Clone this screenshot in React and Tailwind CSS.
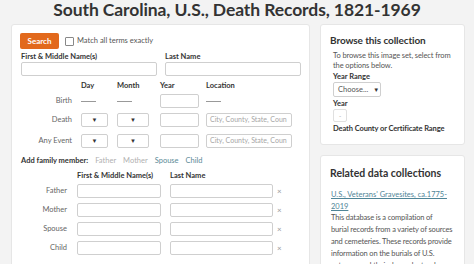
// Formulario de búsqueda de colección con barra lateral
import React from 'react';

const font = { fontFamily: 'Lato, "Noto Sans", sans-serif' };

function Box({ className = '', children }) {
  return (
    <div className={`h-[14px] border border-[#cfcfcf] rounded-[2px] bg-white flex items-center ${className}`}>
      {children}
    </div>
  );
}

function Select({ className = '' }) {
  return (
    <Box className={`justify-center ${className}`}>
      <span className="text-[6px] text-[#333] leading-none">▼</span>
    </Box>
  );
}

function Dash() {
  return <div className="w-[15px] h-px bg-[#999] mt-[1px]" />;
}

function Placeholder() {
  return (
    <Box className="w-[86px] px-[3px] overflow-hidden">
      <span className="text-[7px] text-[#a6a6a6] whitespace-nowrap">City, County, State, Coun</span>
    </Box>
  );
}

function FamilyRow({ label }) {
  return (
    <div className="flex items-center h-[19px]">
      <span className="w-[47px] text-right text-[7.5px] text-[#666]">{label}</span>
      <Box className="w-[84px] ml-[10px]" />
      <Box className="w-[103px] ml-[9px]" />
      <span className="ml-[4px] text-[8px] text-[#999] leading-none">×</span>
    </div>
  );
}

export default function App() {
  return (
    <div className="w-[474px] h-[264px] overflow-hidden bg-[#f3f3f3] text-[#333]" style={font}>
      <h1 className="h-[24px] text-center text-[17.5px] font-bold leading-[20px] text-[#333] tracking-[-0.1px]">
        South Carolina, U.S., Death Records, 1821-1969
      </h1>

      <div className="flex gap-[10px] pl-[11px]">
        {/* Panel principal */}
        <div className="w-[299px] h-[260px] bg-white border border-[#e6e6e6] rounded-[3px] pl-[8px] pt-[8px]">
          <div className="flex items-center">
            <button className="w-[39px] h-[16px] bg-[#e2691c] rounded-[2px] text-white text-[8px] font-bold">
              Search
            </button>
            <div className="ml-[6px] w-[9px] h-[9px] border border-[#888] rounded-[1px]" />
            <span className="ml-[3px] text-[7.5px] text-[#555]">Match all terms exactly</span>
          </div>

          <div className="flex mt-[3px] pl-[1px]">
            <div className="flex flex-col">
              <span className="text-[7.5px] font-bold leading-[10px]">First &amp; Middle Name(s)</span>
              <Box className="w-[136px]" />
            </div>
            <div className="flex flex-col ml-[8px]">
              <span className="text-[7.5px] font-bold leading-[10px]">Last Name</span>
              <Box className="w-[136px]" />
            </div>
          </div>

          {/* Tabla de eventos */}
          <div className="grid grid-cols-[51px_27px_32px_39px_86px] gap-x-[9px] mt-[4px] pl-[1px] items-center">
            <span className="h-[12px]" />
            <span className="text-[7.5px] font-bold leading-[12px]">Day</span>
            <span className="text-[7.5px] font-bold leading-[12px]">Month</span>
            <span className="text-[7.5px] font-bold leading-[12px] ml-[2px]">Year</span>
            <span className="text-[7.5px] font-bold leading-[12px]">Location</span>

            <span className="h-[17px] flex items-center justify-end text-[7.5px] text-[#666]">Birth</span>
            <Dash />
            <Dash />
            <Box className="w-[39px] ml-[2px]" />
            <Dash />

            <span className="h-[21px] flex items-center justify-end text-[7.5px] text-[#666]">Death</span>
            <Select className="w-[27px]" />
            <Select className="w-[32px]" />
            <Box className="w-[39px] ml-[2px]" />
            <Placeholder />

            <span className="h-[21px] flex items-center justify-end text-[7.5px] text-[#666]">Any Event</span>
            <Select className="w-[27px]" />
            <Select className="w-[32px]" />
            <Box className="w-[39px] ml-[2px]" />
            <Placeholder />
          </div>

          <div className="flex items-center mt-[4px] pl-[1px] text-[7.5px] leading-[12px]">
            <span className="font-bold">Add family member:</span>
            <span className="ml-[7px] text-[#b0b0b0]">Father</span>
            <span className="ml-[7px] text-[#b0b0b0]">Mother</span>
            <span className="ml-[7px] text-[#5b8a97]">Spouse</span>
            <span className="ml-[7px] text-[#5b8a97]">Child</span>
          </div>

          <div className="flex pl-[57px] mt-[4px] text-[7.5px] font-bold leading-[10px]">
            <span className="w-[93px]">First &amp; Middle Name(s)</span>
            <span>Last Name</span>
          </div>

          <div>
            <FamilyRow label="Father" />
            <FamilyRow label="Mother" />
            <FamilyRow label="Spouse" />
            <FamilyRow label="Child" />
          </div>
        </div>

        {/* Barra lateral */}
        <div className="w-[145px] flex flex-col gap-[10px]">
          <div className="h-[121px] bg-white border border-[#e6e6e6] rounded-[3px] pl-[9px] pt-[8px]">
            <h2 className="text-[10px] font-bold leading-[14px] tracking-[-0.1px]">Browse this collection</h2>
            <p className="mt-[4px] ml-[3px] text-[7.5px] leading-[10px] text-[#555] whitespace-nowrap tracking-[-0.1px]">
              To browse this image set, select from
              <br />
              the options below.
            </p>
            <div className="ml-[3px] text-[7.5px] font-bold leading-[11px]">Year Range</div>
            <div className="ml-[3px] w-[48px] h-[15px] border border-[#cfcfcf] rounded-[2px] flex items-center pl-[4px]">
              <span className="text-[7.5px] text-[#555]">Choose...</span>
              <span className="ml-[5px] text-[6px] leading-none">▼</span>
            </div>
            <div className="ml-[3px] text-[7.5px] font-bold leading-[11px] mt-[1px]">Year</div>
            <div className="ml-[3px] w-[14px] h-[13px] border border-[#e0e0e0] rounded-[2px] flex items-center justify-center text-[6px] text-[#999]">
              -
            </div>
            <div className="ml-[3px] mt-[1px] text-[7.5px] font-bold leading-[11px] whitespace-nowrap tracking-[-0.1px]">
              Death County or Certificate Range
            </div>
          </div>

          <div className="h-[120px] bg-white border border-[#e6e6e6] rounded-[3px] pl-[9px] pt-[10px] pr-[2px] overflow-hidden">
            <h2 className="text-[10.5px] font-bold leading-[14px]">Related data collections</h2>
            <a className="block mt-[9px] ml-[1px] text-[7.5px] leading-[11.5px] text-[#4f8597] underline whitespace-nowrap">
              U.S., Veterans' Gravesites, ca.1775-
              <br />
              2019
            </a>
            <p className="ml-[1px] text-[7.5px] leading-[12px] text-[#555] whitespace-nowrap tracking-[-0.15px]">
              This database is a compilation of
              <br />
              burial records from a variety of sources
              <br />
              and cemeteries. These records provide
              <br />
              information on the burials of U.S.
              <br />
              veterans and their dependents who
            </p>
          </div>
        </div>
      </div>
    </div>
  );
}
